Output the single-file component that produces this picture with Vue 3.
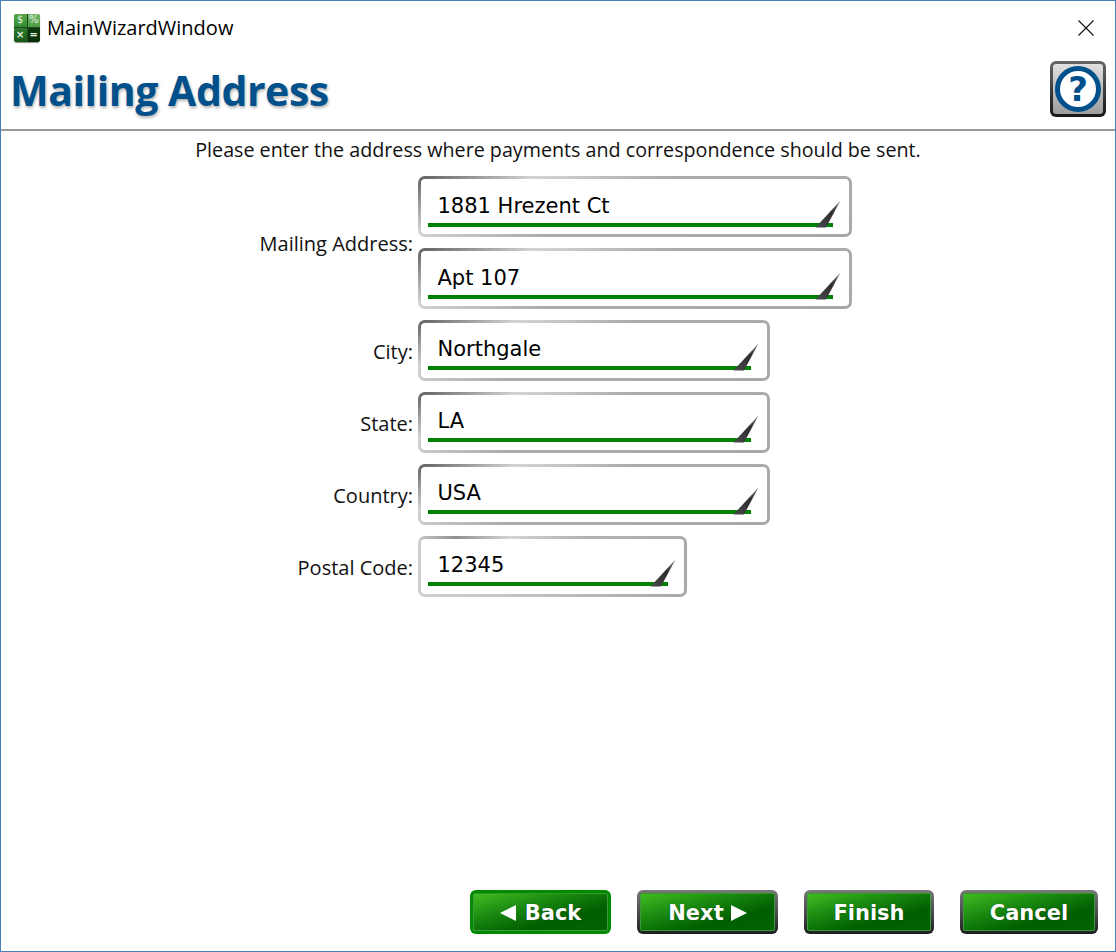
<script setup>
import { reactive } from 'vue'

const form = reactive({
  address1: '1881 Hrezent Ct',
  address2: 'Apt 107',
  city: 'Northgale',
  state: 'LA',
  country: 'USA',
  postal: '12345'
})

const rows = [
  { label: 'Mailing Address:', fields: ['address1', 'address2'], size: 'lg' },
  { label: 'City:', fields: ['city'], size: 'md' },
  { label: 'State:', fields: ['state'], size: 'md' },
  { label: 'Country:', fields: ['country'], size: 'md' },
  { label: 'Postal Code:', fields: ['postal'], size: 'sm' }
]
</script>

<template>
  <div class="window">
    <div class="titlebar">
      <div class="app-icon">
        <span class="cell">$</span>
        <span class="cell light-cell">%</span>
        <span class="cell dark">×</span>
        <span class="cell darker">=</span>
      </div>
      <span class="window-title">MainWizardWindow</span>
      <svg class="close" width="16" height="16" viewBox="0 0 16 16">
        <path d="M0.5 0.5 L15.5 15.5 M15.5 0.5 L0.5 15.5" stroke="#111" stroke-width="1.1" fill="none" />
      </svg>
    </div>

    <header class="header">
      <h1 class="heading">Mailing Address</h1>
      <button class="help" type="button" aria-label="Help">
        <span class="help-face">
          <span class="help-ring">?</span>
        </span>
      </button>
    </header>

    <p class="intro">Please enter the address where payments and correspondence should be sent.</p>

    <form class="form" @submit.prevent>
      <template v-for="row in rows" :key="row.label">
        <label class="label">{{ row.label }}</label>
        <div class="stack">
          <div v-for="name in row.fields" :key="name" class="field" :class="[row.size, { light: name === 'postal' }]">
            <div class="field-inner">
              <div class="field-line">
                <input v-model="form[name]" class="input" type="text" />
              </div>
              <svg class="tick" width="26" height="28" viewBox="0 0 26 28">
                <defs>
                  <linearGradient id="tickFill" x1="1" y1="0" x2="0" y2="1">
                    <stop offset="0" stop-color="#8a8a8a" />
                    <stop offset="0.4" stop-color="#2c2c2c" />
                    <stop offset="1" stop-color="#4c4c4c" />
                  </linearGradient>
                </defs>
                <path d="M25.5 0.5 L0.5 27.5 L11 27.5 Z" fill="url(#tickFill)" />
              </svg>
            </div>
          </div>
        </div>
      </template>
    </form>

    <footer class="footer">
      <button class="btn back" type="button"><span class="btn-face wide"><span class="arrow-left"></span>Back</span></button>
      <button class="btn next" type="button"><span class="btn-face">Next<span class="arrow-right"></span></span></button>
      <button class="btn finish" type="button"><span class="btn-face">Finish</span></button>
      <button class="btn cancel" type="button"><span class="btn-face">Cancel</span></button>
    </footer>
  </div>
</template>

<style>
html, body { margin: 0; background: #fff; }
</style>

<style scoped>
.window {
  box-sizing: border-box;
  width: 1116px;
  height: 952px;
  display: flex;
  flex-direction: column;
  border: 1px solid #4a7fb5;
  background: #fff;
  font-family: "Open Sans", "Noto Sans", sans-serif;
  color: #111;
}

.titlebar {
  display: flex;
  align-items: center;
  height: 53px;
  padding: 0 21px 0 13px;
  flex: none;
}
.app-icon {
  width: 26px;
  height: 28px;
  display: grid;
  grid-template-columns: 1fr 1fr;
  grid-template-rows: 1fr 1fr;
  gap: 1px;
  border-radius: 3px;
  overflow: hidden;
  background: #1c4a1c;
  margin-right: 7px;
  box-shadow: 0 1px 1px #888;
}
.cell {
  display: flex;
  align-items: center;
  justify-content: center;
  font: 10px/1 "DejaVu Sans", sans-serif;
  color: #e2f0e2;
  background: linear-gradient(#5aa84a, #2f8a2f);
}
.cell.light-cell { background: linear-gradient(#79b86c, #4c9a44); }
.cell.dark { background: linear-gradient(#2f7a2f, #175a17); font-weight: bold; }
.cell.darker { background: linear-gradient(#0c3a0c, #0a2c0a); font-weight: bold; }
.window-title {
  font-size: 20px;
  flex: 1;
  color: #000;
}

.header {
  height: 77px;
  flex: none;
  box-sizing: border-box;
  display: flex;
  align-items: center;
  justify-content: space-between;
  padding: 0 9px 0 9px;
  border-bottom: 2px solid #999;
}
.heading {
  margin: -4px 0 0;
  font-size: 41px;
  font-weight: 700;
  letter-spacing: -0.45px;
  color: #00508c;
  text-shadow: 1px 2px 3px rgba(0, 0, 0, 0.3);
}
.help {
  box-sizing: border-box;
  width: 56px;
  height: 56px;
  padding: 3px;
  border: none;
  border-radius: 6px;
  background: linear-gradient(#666, #161616);
  margin-top: -5px;
}
.help-face {
  height: 100%;
  display: flex;
  align-items: center;
  justify-content: center;
  border-radius: 3px;
  background: linear-gradient(#e0e0e0, #9e9e9e);
}
.help-ring {
  box-sizing: border-box;
  width: 46px;
  height: 46px;
  border: 5px solid #00508c;
  border-radius: 50%;
  background: #fff;
  color: #00508c;
  font: bold 34px/36px "DejaVu Sans", sans-serif;
  text-align: center;
}

.intro {
  margin: 6px 0 0;
  height: 39px;
  flex: none;
  text-align: center;
  font-size: 19.7px;
  line-height: 26px;
  color: #111;
}

.form {
  display: grid;
  grid-template-columns: 412px 1fr;
  column-gap: 5px;
  row-gap: 11px;
  align-items: center;
}
.label {
  text-align: right;
  font-size: 20px;
  line-height: 26px;
  padding-top: 3px;
}
.stack {
  display: flex;
  flex-direction: column;
  gap: 11px;
}
.field {
  box-sizing: border-box;
  height: 61px;
  padding: 3px;
  border-radius: 7px;
  background: linear-gradient(155deg, #5e5e5e 0%, #8c8c8c 8%, #d4d4d4 21%, #ababab 45%, #a8a8a8 100%);
}
.field.lg { width: 434px; }
.field.md { width: 352px; }
.field.sm { width: 269px; }
.field.light {
  background:
    linear-gradient(90deg, #c8c8c8 0%, #8f8f8f 14%, #d4d4d4 34%, #b4b4b4 60%, #ababab 100%) top / 100% 4px no-repeat,
    linear-gradient(90deg, #d0d0d0 0%, #c0c0c0 45%, #a8a8a8 100%);
}
.field-inner {
  position: relative;
  height: 100%;
  box-sizing: border-box;
  padding: 0 16px 8px 7px;
  display: flex;
  align-items: flex-end;
  background: #fff;
  border-radius: 4px;
}
.field.lg .field-inner { padding-bottom: 7px; }
.field-line {
  flex: 1;
  border-bottom: 4px solid #008000;
}
.input {
  display: block;
  box-sizing: border-box;
  width: 100%;
  height: 36px;
  padding: 2px 0 0 9.5px;
  border: none;
  outline: none;
  background: transparent;
  font: 21px "DejaVu Sans", sans-serif;
  color: #000;
}
.tick {
  position: absolute;
  right: 8px;
  bottom: 7px;
}
.field.lg .tick { bottom: 6px; }

.footer {
  margin-top: auto;
  display: flex;
  justify-content: flex-end;
  gap: 26px;
  padding: 0 17px 17px 0;
}
.btn {
  box-sizing: border-box;
  height: 44px;
  padding: 3px;
  border: none;
  border-radius: 6px;
  background: linear-gradient(#7a7a7a, #1e1e1e);
  font: bold 21px "DejaVu Sans", sans-serif;
  color: #fff;
}
.btn.back { width: 141px; background: #008a00; }
.btn.next { width: 141px; }
.btn.finish { width: 130px; }
.btn.cancel { width: 138px; }
.btn-face {
  box-sizing: border-box;
  height: 100%;
  display: flex;
  align-items: center;
  justify-content: center;
  gap: 7px;
  padding-top: 2px;
  border-radius: 2px;
  border: 1px solid #3f9a3f;
  border-top-color: #2f9a1f;
  background: linear-gradient(165deg, #42bb22 0%, #1a8a10 35%, #005f00 68%, #006400 100%);
  text-shadow: 0 0 1px rgba(0, 0, 0, 0.6);
}
.btn-face.wide { gap: 9px; }
.arrow-left, .arrow-right {
  width: 0;
  height: 0;
  border-top: 8.5px solid transparent;
  border-bottom: 8.5px solid transparent;
}
.arrow-left { border-right: 16px solid #fff; }
.arrow-right { border-left: 16px solid #fff; }
</style>
